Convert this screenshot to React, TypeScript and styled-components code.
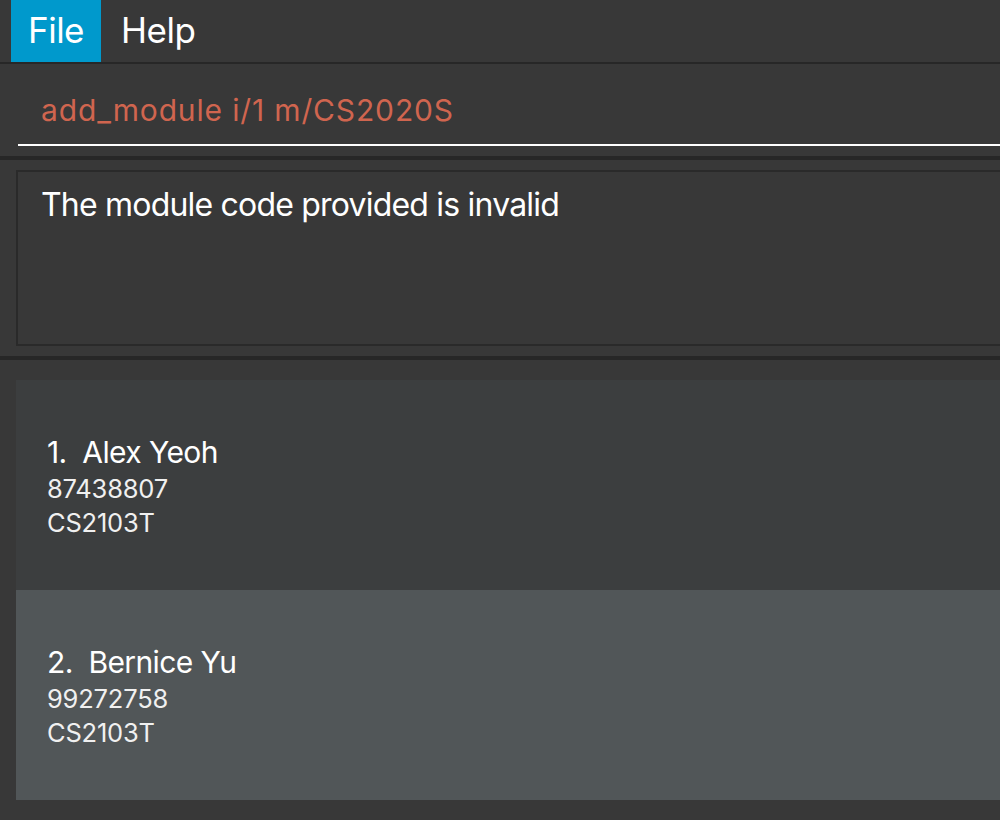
import React from "react";
import styled, { createGlobalStyle } from "styled-components";

const Global = createGlobalStyle`
  html, body { margin: 0; padding: 0; background: #383838; }
  body { font-family: Inter, "Open Sans", "Liberation Sans", sans-serif; }
  * { box-sizing: border-box; }
`;

const Window = styled.div`
  width: 1000px;
  height: 820px;
  display: flex;
  flex-direction: column;
  background: #383838;
  overflow: hidden;
`;

const MenuBar = styled.div`
  height: 62px;
  display: flex;
  padding-left: 11px;
  gap: 3px;
`;

const MenuItem = styled.div<{ $active?: boolean }>`
  height: 62px;
  padding: 0 17px 2px;
  display: flex;
  align-items: center;
  font-size: 35px;
  letter-spacing: -0.5px;
  color: #ffffff;
  background: ${(p) => (p.$active ? "#0099cc" : "transparent")};
`;

const Divider = styled.div<{ $h: number }>`
  height: ${(p) => p.$h}px;
  background: #272727;
  flex: none;
`;

const CommandArea = styled.div`
  height: 92px;
  padding: 0 0 10px 18px;
  display: flex;
  align-items: flex-end;
`;

const CommandInput = styled.div`
  flex: 1;
  height: 70px;
  border-bottom: 2px solid #ffffff;
  padding: 16px 0 0 23px;
  font-size: 30px;
  letter-spacing: 0.85px;
  color: #d0654f;
  white-space: nowrap;
`;

const ResultArea = styled.div`
  height: 196px;
  padding: 10px 0 10px 16px;
  display: flex;
`;

const ResultBox = styled.div`
  flex: 1;
  border: 2px solid #2a2a2a;
  border-right: none;
  padding: 13px 0 0 23px;
  font-size: 32px;
  letter-spacing: -0.8px;
  color: #ffffff;
`;

const ListArea = styled.div`
  flex: 1;
  padding: 20px 0 0 16px;
  display: flex;
  flex-direction: column;
`;

const Cell = styled.div<{ $odd?: boolean }>`
  height: 210px;
  flex: none;
  background: ${(p) => (p.$odd ? "#515658" : "#3c3e3f")};
  padding: 52px 0 0 31px;
  display: flex;
  flex-direction: column;
  color: #ffffff;
`;

const Name = styled.div`
  font-size: 30px;
  line-height: 40px;
  letter-spacing: -0.6px;
  white-space: pre;
`;

const Detail = styled.div`
  font-size: 25.5px;
  line-height: 34px;
  letter-spacing: -0.2px;
  color: #f0f0f0;
`;

const persons = [
  { name: "Alex Yeoh", phone: "87438807", module: "CS2103T" },
  { name: "Bernice Yu", phone: "99272758", module: "CS2103T" },
];

export default function App() {
  return (
    <Window>
      <Global />
      <MenuBar>
        <MenuItem $active>File</MenuItem>
        <MenuItem>Help</MenuItem>
      </MenuBar>
      <Divider $h={2} />
      <CommandArea>
        <CommandInput>add_module i/1 m/CS2020S</CommandInput>
      </CommandArea>
      <Divider $h={4} />
      <ResultArea>
        <ResultBox>The module code provided is invalid</ResultBox>
      </ResultArea>
      <Divider $h={4} />
      <ListArea>
        {persons.map((p, i) => (
          <Cell key={p.name} $odd={i % 2 === 1}>
            <Name>{`${i + 1}.  ${p.name}`}</Name>
            <Detail>{p.phone}</Detail>
            <Detail>{p.module}</Detail>
          </Cell>
        ))}
      </ListArea>
    </Window>
  );
}
